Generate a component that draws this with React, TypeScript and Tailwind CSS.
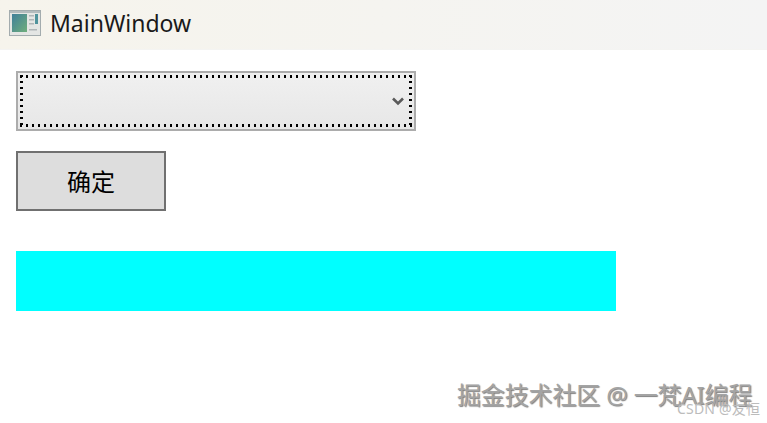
import React from "react";

const TitleIcon = () => (
  <svg width="32" height="26" viewBox="0 0 32 26" className="shrink-0">
    <defs>
      <linearGradient id="pane" x1="0" y1="0" x2="1" y2="1">
        <stop offset="0" stopColor="#3f7f9a" />
        <stop offset="1" stopColor="#6fae7c" />
      </linearGradient>
    </defs>
    <rect x="0.5" y="0.5" width="31" height="25" fill="#e4e6e4" stroke="#a3acae" />
    <rect x="1" y="1" width="30" height="2" fill="#b4bcbe" />
    <rect x="3" y="4" width="15" height="18" fill="url(#pane)" />
    <rect x="20" y="5" width="5" height="1.5" fill="#b0b6b8" />
    <rect x="20" y="9" width="5" height="1.5" fill="#b0b6b8" />
    <rect x="20" y="13" width="5" height="1.5" fill="#b0b6b8" />
    <rect x="20" y="19" width="8" height="1.5" fill="#b0b6b8" />
    <rect x="26" y="4" width="3" height="10" fill="#4f939c" />
  </svg>
);

export default function App() {
  return (
    <div className="relative w-[767px] h-[423px] overflow-hidden bg-white font-['Noto_Sans','Noto_Sans_CJK_SC',sans-serif] text-black">
      <div className="flex h-[50px] items-center gap-[9px] pl-[9px] pb-[3px] bg-gradient-to-r from-[#f6f4ec] to-[#f4f4f4] border-b border-[#f4f4f2]">
        <TitleIcon />
        <span className="text-[23px] leading-none text-[#1a1a1a]">MainWindow</span>
      </div>

      <div className="flex flex-col items-start px-4 pt-[21px]">
        <div className="w-[400px] h-[60px] border-2 border-[#acacac] bg-gradient-to-b from-[#f0f0f0] to-[#e7e7e7] p-[2px]">
          <div className="flex h-full items-center justify-end pr-[8px] bg-no-repeat [background-image:repeating-linear-gradient(90deg,#000_0_2px,transparent_2px_6px),repeating-linear-gradient(90deg,#000_0_2px,transparent_2px_6px),repeating-linear-gradient(180deg,#000_0_2px,transparent_2px_6px),repeating-linear-gradient(180deg,#000_0_2px,transparent_2px_6px)] [background-size:100%_3px,100%_3px,3px_100%,3px_100%] [background-position:0_0,0_100%,0_0,100%_0]">
            <svg width="12" height="9" viewBox="0 0 12 9" className="mt-[1px]">
              <path d="M1 1.5 L6 6.5 L11 1.5" fill="none" stroke="#5a5a5a" strokeWidth="2.6" />
            </svg>
          </div>
        </div>

        <button className="mt-5 w-[150px] h-[60px] border-2 border-[#707070] bg-[#dddddd] text-[24px] leading-none font-['Noto_Sans_CJK_SC',sans-serif]">
          确定
        </button>

        <div className="mt-10 w-[600px] h-[60px] bg-[#00ffff]" />
      </div>

      <span className="absolute left-[457px] top-[378px] text-[24px] leading-[34px] tracking-[-0.15px] whitespace-nowrap text-[#a4a4a4] [text-shadow:1px_1px_1px_#808080]">
        掘金技术社区 @ 一梵AI编程
      </span>
      <span className="absolute left-[677px] top-[400px] text-[14px] leading-[18px] tracking-[0.2px] whitespace-nowrap text-[#bcbcbc]">
        CSDN @友恒
      </span>
    </div>
  );
}
